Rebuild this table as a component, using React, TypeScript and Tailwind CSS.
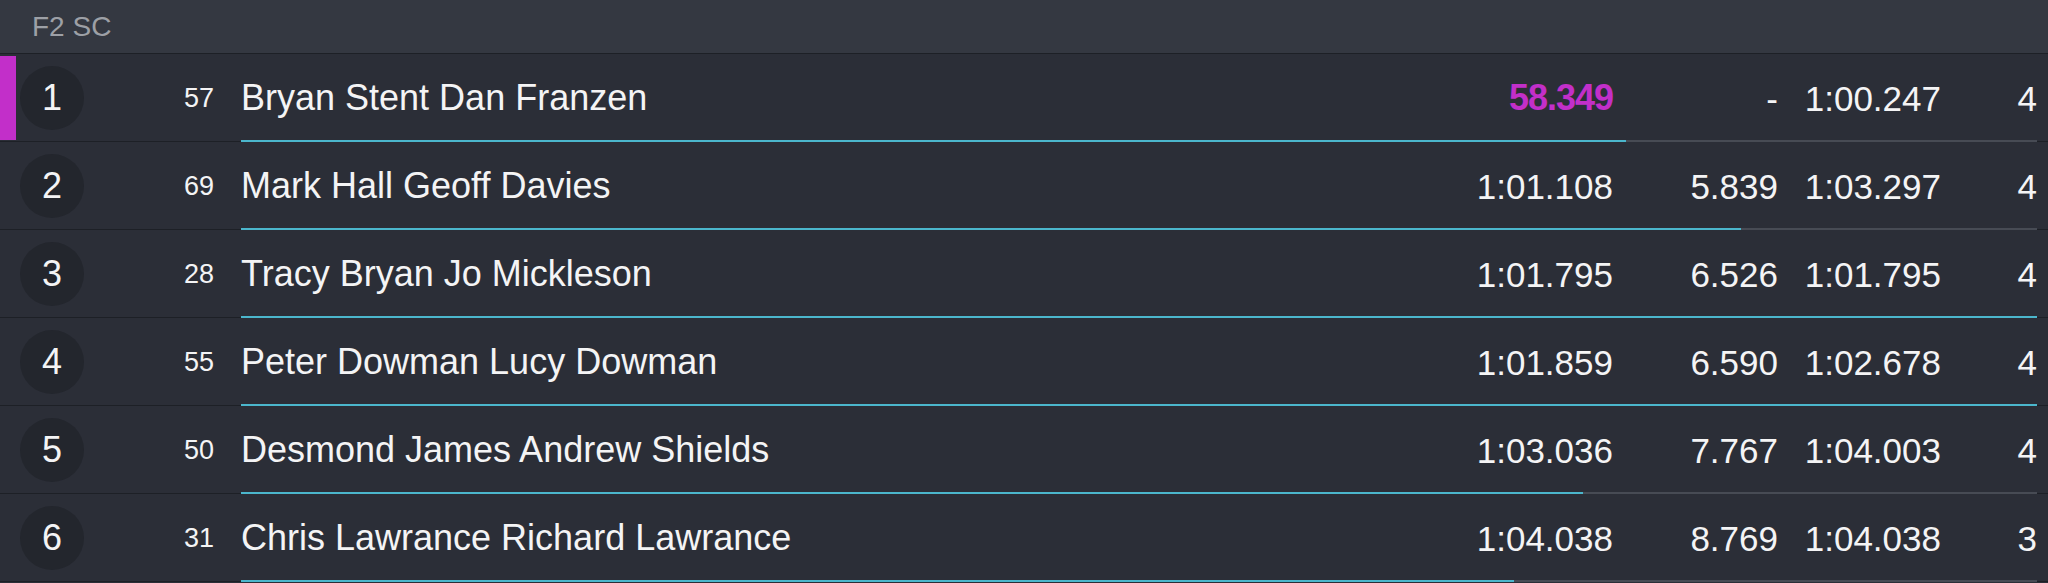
const rows = [
  { pos: 1, car: '57', name: 'Bryan Stent Dan Franzen', best: '58.349', gap: '-', last: '1:00.247', laps: '4', progress: 77.1, leader: true },
  { pos: 2, car: '69', name: 'Mark Hall Geoff Davies', best: '1:01.108', gap: '5.839', last: '1:03.297', laps: '4', progress: 83.5 },
  { pos: 3, car: '28', name: 'Tracy Bryan Jo Mickleson', best: '1:01.795', gap: '6.526', last: '1:01.795', laps: '4', progress: 100 },
  { pos: 4, car: '55', name: 'Peter Dowman Lucy Dowman', best: '1:01.859', gap: '6.590', last: '1:02.678', laps: '4', progress: 100 },
  { pos: 5, car: '50', name: 'Desmond James Andrew Shields', best: '1:03.036', gap: '7.767', last: '1:04.003', laps: '4', progress: 74.7 },
  { pos: 6, car: '31', name: 'Chris Lawrance Richard Lawrance', best: '1:04.038', gap: '8.769', last: '1:04.038', laps: '3', progress: 70.9 },
];

export default function App() {
  return (
    <div className="min-h-screen w-[2048px] bg-[#2b2e37] font-['Liberation_Sans',Arial,sans-serif] text-[#f4f4f5]">
      {/* Class header */}
      <div className="flex h-[54px] items-center border-b border-[#1d2026] bg-[#343841] pl-[32px]">
        <span className="text-[28px] leading-none text-[#9da0a6]">F2 SC</span>
      </div>

      {rows.map((r) => (
        <div key={r.pos} className="flex h-[88px] flex-col">
          <div className="flex h-[86px] items-center pt-[2px]">
            <div className={`h-full w-[16px] shrink-0 ${r.leader ? 'bg-[#c22fc9]' : ''}`}></div>
            <div className="ml-[4px] flex h-[64px] w-[64px] shrink-0 items-center justify-center rounded-full bg-[#23262d] text-[36px] leading-none">
              {r.pos}
            </div>
            <div className="w-[130px] shrink-0 text-right text-[27px] leading-none">{r.car}</div>
            <div className="ml-[27px] flex-1 whitespace-nowrap text-[36px] leading-none">{r.name}</div>
            <div
              className={`shrink-0 text-right leading-none ${
                r.leader ? 'text-[36px] font-bold tracking-[-1px] text-[#c22fc9]' : 'text-[35px]'
              }`}
            >
              {r.best}
            </div>
            <div className="w-[165px] shrink-0 text-right text-[35px] leading-none">{r.gap}</div>
            <div className="w-[163px] shrink-0 text-right text-[35px] leading-none">{r.last}</div>
            <div className="w-[107px] shrink-0 pr-[11px] text-right text-[35px] leading-none">{r.laps}</div>
          </div>
          {/* Progress track */}
          <div className="flex h-[2px]">
            <div className="w-[241px] shrink-0 border-b border-[#1d2026]"></div>
            <div className="flex-1 bg-[#474b54]">
              <div className="h-full bg-[#4bb6cc]" style={{ width: `${r.progress}%` }}></div>
            </div>
            <div className="w-[11px] shrink-0 border-b border-[#1d2026]"></div>
          </div>
        </div>
      ))}
    </div>
  );
}
